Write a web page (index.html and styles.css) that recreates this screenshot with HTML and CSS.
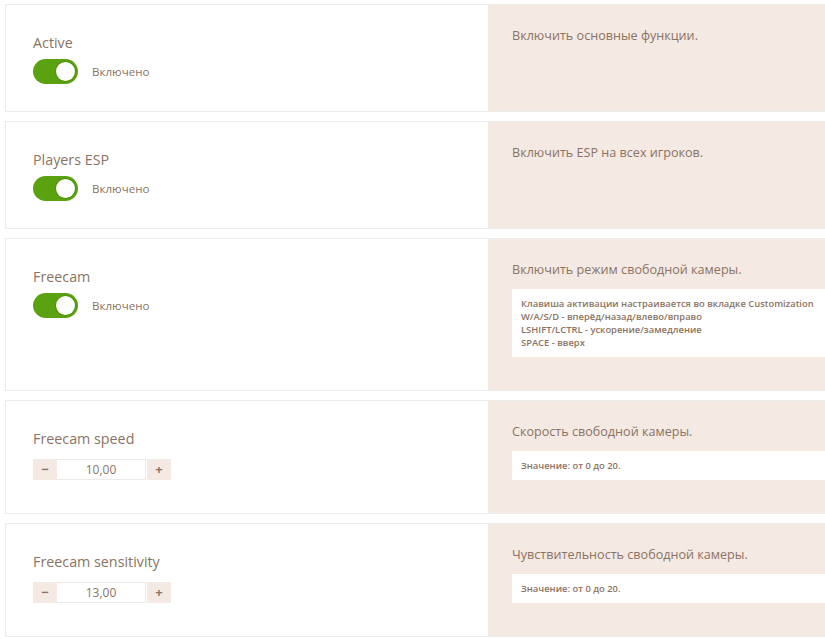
FILE: index.html
```html
<!DOCTYPE html>
<html lang="ru">
<head>
<meta charset="UTF-8">
<meta name="viewport" content="width=device-width, initial-scale=1.0">
<title>Settings</title>
<link rel="stylesheet" href="styles.css">
</head>
<body>
<div class="settings">
    <div class="option">
        <div class="option-main">
            <div class="option-label">Active</div>
            <div class="switch-row">
                <span class="switch on"><span class="knob"></span></span>
                <span class="switch-text">Включено</span>
            </div>
        </div>
        <div class="option-help">
            <div class="help-title">Включить основные функции.</div>
        </div>
    </div>

    <div class="option">
        <div class="option-main">
            <div class="option-label">Players ESP</div>
            <div class="switch-row">
                <span class="switch on"><span class="knob"></span></span>
                <span class="switch-text">Включено</span>
            </div>
        </div>
        <div class="option-help">
            <div class="help-title">Включить ESP на всех игроков.</div>
        </div>
    </div>

    <div class="option">
        <div class="option-main">
            <div class="option-label">Freecam</div>
            <div class="switch-row">
                <span class="switch on"><span class="knob"></span></span>
                <span class="switch-text">Включено</span>
            </div>
        </div>
        <div class="option-help">
            <div class="help-title">Включить режим свободной камеры.</div>
            <div class="help-note">
                Клавиша активации настраивается во вкладке Customization<br>
                W/A/S/D - вперёд/назад/влево/вправо<br>
                LSHIFT/LCTRL - ускорение/замедление<br>
                SPACE - вверх
            </div>
        </div>
    </div>

    <div class="option">
        <div class="option-main">
            <div class="option-label">Freecam speed</div>
            <div class="spinner">
                <button class="spin-btn">&minus;</button>
                <input class="spin-value" type="text" value="10,00">
                <button class="spin-btn">+</button>
            </div>
        </div>
        <div class="option-help">
            <div class="help-title">Скорость свободной камеры.</div>
            <div class="help-note">Значение: от 0 до 20.</div>
        </div>
    </div>

    <div class="option">
        <div class="option-main">
            <div class="option-label">Freecam sensitivity</div>
            <div class="spinner">
                <button class="spin-btn">&minus;</button>
                <input class="spin-value" type="text" value="13,00">
                <button class="spin-btn">+</button>
            </div>
        </div>
        <div class="option-help">
            <div class="help-title">Чувствительность свободной камеры.</div>
            <div class="help-note">Значение: от 0 до 20.</div>
        </div>
    </div>
</div>
</body>
</html>
```

FILE: styles.css
```css
html {
    overflow: hidden;
}
body {
    font-family: "Open Sans", "Liberation Sans", sans-serif;
    margin: 0;
    padding: 4px 0 0 5px;
    background-color: #fff;
    color: #8b7363;
}
.settings {
    width: 884px;
    display: flex;
    flex-direction: column;
    gap: 9px;
}
.option {
    display: flex;
    border: 1px solid #ececec;
    background-color: #fff;
}
.option-main {
    width: 482px;
    padding: 28px 0 27px 27px;
    box-sizing: border-box;
}
.option-label {
    font-size: 14.3px;
    line-height: 20px;
    margin-bottom: 6px;
}
.switch-row {
    display: flex;
    align-items: center;
}
.switch {
    position: relative;
    width: 45px;
    height: 25px;
    border-radius: 13px;
    background-color: #5aa20f;
}
.switch .knob {
    position: absolute;
    top: 3px;
    right: 3px;
    width: 19px;
    height: 19px;
    border-radius: 50%;
    background-color: #fff;
    box-shadow: 0 0 0 1px #4f8f0c;
}
.switch-text {
    font-size: 11.6px;
    margin-left: 14px;
}
.spinner {
    display: flex;
    margin-top: 10px;
    height: 21px;
}
.spin-btn {
    width: 24px;
    height: 21px;
    border: none;
    padding: 0;
    background-color: #f4e9e3;
    color: #8b7363;
    font-family: inherit;
    font-size: 13px;
    font-weight: bold;
    line-height: 21px;
}
.spin-value {
    width: 89px;
    height: 21px;
    box-sizing: border-box;
    border: 1px solid #efe9e5;
    border-left: none;
    padding: 0;
    margin-right: 1px;
    text-align: center;
    font-family: inherit;
    font-size: 12px;
    color: #8b7363;
    background-color: #fff;
}
.option-help {
    flex: 1;
    background-color: #f4e9e3;
    padding: 22px 24px 33px 24px;
}
.help-title {
    font-size: 12.6px;
    line-height: 18px;
}
.help-note {
    margin-top: 10px;
    background-color: #fff;
    padding: 8px 9px;
    font-size: 9.4px;
    line-height: 13px;
    font-weight: 600;
}
```
